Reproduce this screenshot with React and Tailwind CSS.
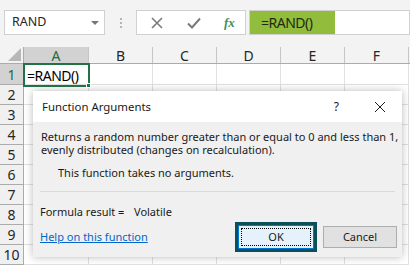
import React from 'react';

const cols = ['A', 'B', 'C', 'D', 'E', 'F'];
const rows = [1, 2, 3, 4, 5, 6, 7, 8, 9, 10];

function FormulaBar() {
    return (
        <div className="h-[47px] bg-[#f3f3f3] flex items-start pt-[10px] pl-[4px]">
            <div className="w-[101px] h-[25px] bg-white border border-[#d0d0d0] flex items-center justify-between pl-[7px] pr-[5px]">
                <span className="text-[12.5px] text-[#262626]">RAND</span>
                <span className="w-0 h-0 border-l-[4px] border-r-[4px] border-t-[4px] border-l-transparent border-r-transparent border-t-[#767676]" />
            </div>
            <div className="w-[31px] h-[25px] flex flex-col items-center justify-center gap-[2px]">
                <span className="w-[2px] h-[2px] bg-[#b5b5b5]" />
                <span className="w-[2px] h-[2px] bg-[#b5b5b5]" />
                <span className="w-[2px] h-[2px] bg-[#b5b5b5]" />
            </div>
            <div className="w-[110px] h-[25px] bg-white border border-[#d0d0d0] flex items-center">
                <svg width="12" height="12" viewBox="0 0 12 12" className="ml-[14px]">
                    <path d="M1 1 L11 11 M11 1 L1 11" stroke="#7a7a7a" strokeWidth="1.6" />
                </svg>
                <svg width="14" height="12" viewBox="0 0 14 12" className="ml-[24px]">
                    <path d="M1 6.5 L5 10.5 L13 1.5" stroke="#7a7a7a" strokeWidth="2" fill="none" />
                </svg>
                <span className="ml-[23px] text-[13px] italic font-bold text-[#3c9063]" style={{ fontFamily: '"Liberation Serif", serif' }}>fx</span>
            </div>
            <div className="flex-1 h-[25px] ml-[3px] bg-white border border-[#d0d0d0] flex">
                <div className="w-[85px] h-full bg-[#92bc3c] flex items-center pl-[11px] text-[14px] tracking-[-0.5px] text-[#1f2a10]">=RAND()</div>
            </div>
        </div>
    );
}

function Sheet() {
    return (
        <div>
            <div className="h-[17px] flex bg-[#f3f3f3] border-b border-[#ababab]">
                <div className="w-[24px] h-full flex items-end justify-end pr-[2px] pb-[2px] border-r border-[#ababab]">
                    <span className="w-0 h-0 border-l-[13px] border-b-[13px] border-l-transparent border-b-[#b7b7b7]" />
                </div>
                {cols.map((c, i) => (
                    <div key={c} className={`${i === 0 ? 'w-[65px] bg-[#d2d2d2] text-[#1e6b41]' : 'w-[64px] text-[#262626]'} h-full flex items-center justify-center border-r border-[#c6c6c6] text-[14px]`}>
                        {c}
                    </div>
                ))}
            </div>
            {rows.map(r => (
                <div key={r} className={`flex ${r === 1 ? 'h-[21px]' : 'h-[20px]'}`}>
                    <div className={`w-[24px] h-full flex items-center justify-center border-r border-b border-[#ababab] text-[14px] ${r === 1 ? 'bg-[#d2d2d2] text-[#1e6b41]' : 'bg-[#f0f0f0] text-[#262626]'}`}>
                        {r}
                    </div>
                    {cols.map((c, i) => (
                        <div key={c} className={`${i === 0 ? 'w-[65px]' : 'w-[64px]'} h-full bg-white border-r border-b border-[#e1e1e1] relative`}>
                            {r === 1 && i === 0 && (
                                <div className="absolute -left-[1px] -top-[1px] w-[67px] h-[24px] border-2 border-[#217346] flex items-center pl-[2px] text-[14px] tracking-[-0.5px] text-black z-10">
                                    =RAND()
                                    <span className="absolute -right-[3px] -bottom-[3px] w-[5px] h-[5px] bg-[#217346] border border-white" />
                                </div>
                            )}
                        </div>
                    ))}
                </div>
            ))}
        </div>
    );
}

function Dialog() {
    return (
        <div className="absolute left-[33px] top-[91px] w-[369px] h-[166px] bg-[#f0f0f0] shadow-[0_0_8px_rgba(0,0,0,0.28)] flex flex-col text-[11px] text-[#1a1a1a] whitespace-nowrap">
            <div className="h-[31px] shrink-0 bg-white flex items-center pl-[9px] pr-[16px] pt-[1px] text-[11.4px]">
                <span className="flex-1">Function Arguments</span>
                <span className="text-[12px] mr-[35px]">?</span>
                <svg width="12" height="12" viewBox="0 0 12 12">
                    <path d="M1 1 L11 11 M11 1 L1 11" stroke="#1a1a1a" strokeWidth="1" />
                </svg>
            </div>
            <div className="pl-[8px] pt-[8px] leading-[13px] shrink-0">
                <p>Returns a random number greater than or equal to 0 and less than 1,</p>
                <p>evenly distributed (changes on recalculation).</p>
                <p className="pl-[17px] mt-[10px]">This function takes no arguments.</p>
            </div>
            <div className="mx-[7px] mt-[12px] border-t border-[#d9d9d9] shrink-0" />
            <div className="pl-[7px] mt-[13px] flex leading-[13px] shrink-0">
                <span className="w-[94px] shrink-0">Formula result =</span>
                <span>Volatile</span>
            </div>
            <div className="pl-[7px] mt-[4px] flex items-center justify-between pr-[5px] shrink-0">
                <span className="text-[#0066cc] underline">Help on this function</span>
                <div className="flex items-center gap-[6px]">
                    <div className="w-[82px] h-[30px] bg-[#0b4f57] p-[3px]">
                        <div className="w-full h-full border border-[#0078d7] bg-[#e5f1fb] p-[2px]">
                            <div className="w-full h-full border border-dotted border-black flex items-center justify-center">OK</div>
                        </div>
                    </div>
                    <div className="w-[74px] h-[22px] border border-[#adadad] bg-[#e1e1e1] flex items-center justify-center">Cancel</div>
                </div>
            </div>
        </div>
    );
}

export default function App() {
    return (
        <div className="w-[410px] h-[267px] overflow-hidden relative bg-white" style={{ fontFamily: '"Noto Sans", "Open Sans", sans-serif' }}>
            <FormulaBar />
            <Sheet />
            <Dialog />
        </div>
    );
}
